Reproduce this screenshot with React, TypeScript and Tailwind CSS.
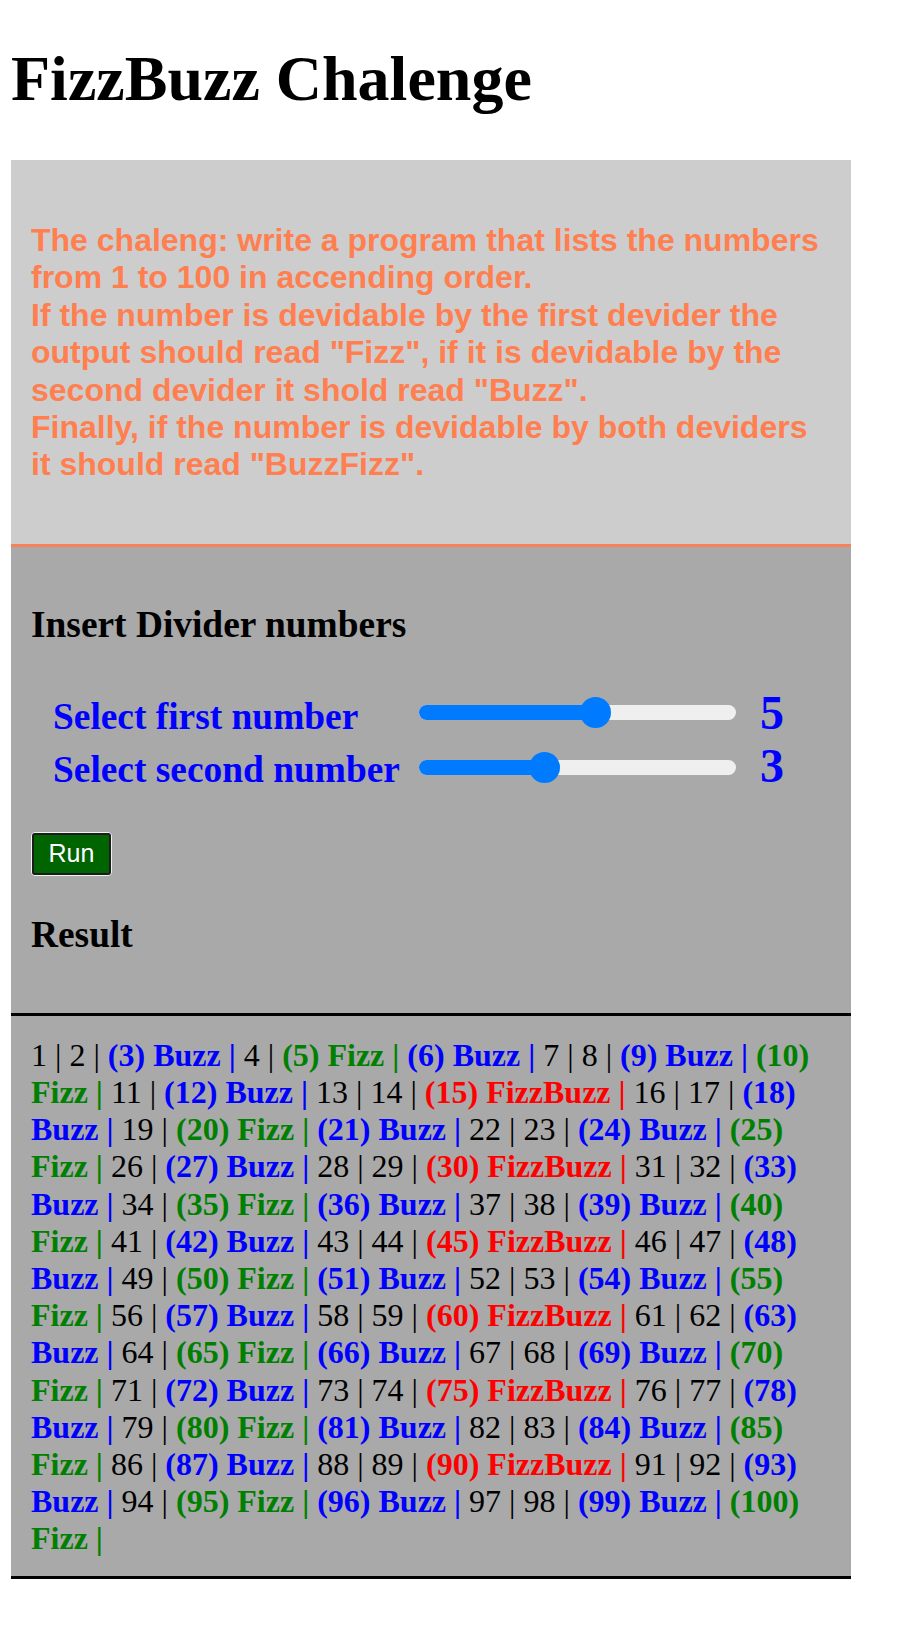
import React from "react";

const serif = "font-['Liberation_Serif','Times_New_Roman',serif]";

function Slider({ variant }: { variant: 1 | 2 }) {
  const fill = variant === 1 ? "w-[177px]" : "w-[126px]";
  const thumb = variant === 1 ? "left-[161px]" : "left-[110px]";
  const mt = variant === 1 ? "mt-[2px]" : "mt-[4px]";
  return (
    <div className={`relative ml-[1px] w-[317px] h-[31px] shrink-0 ${mt}`}>
      <div className="absolute left-0 right-0 top-[8px] h-[15px] rounded-full bg-[#efefef]" />
      <div className={`absolute left-0 top-[8px] h-[15px] rounded-l-full bg-[#007bff] ${fill}`} />
      <div className={`absolute top-0 w-[31px] h-[31px] rounded-full bg-[#007bff] ${thumb}`} />
    </div>
  );
}

function Results() {
  const breakAfter = new Set([10, 18, 25, 33, 40, 48, 55, 63, 70, 78, 85, 93, 100]);
  const out: React.ReactNode[] = [];
  for (let n = 1; n <= 100; n++) {
    const f = n % 5 === 0;
    const b = n % 3 === 0;
    if (!f && !b) {
      out.push(<span key={n}>{`${n} | `}</span>);
      continue;
    }
    const word = f && b ? "FizzBuzz" : f ? "Fizz" : "Buzz";
    const color = f && b ? "text-[#ff0000]" : f ? "text-[#008000]" : "text-[#0000ff]";
    out.push(
      <React.Fragment key={n}>
        <b className={`font-bold ${color}`}>
          {`(${n})`}
          {breakAfter.has(n) ? <br /> : " "}
          {`${word} |`}
        </b>{" "}
      </React.Fragment>
    );
  }
  return <>{out}</>;
}

export default function App() {
  return (
    <div className={`bg-white min-h-[1650px] pt-[42px] px-[11px] text-black ${serif}`}>
      <h1 className="text-[64px] leading-[74px] font-bold mb-[44px] whitespace-nowrap">FizzBuzz Chalenge</h1>

      <div className="w-[840px]">
        <div className="bg-[#cdcdcd] px-[20px] pt-[62px] pb-[60px] border-b-[3px] border-[#f7825a]">
          <p className="font-['Liberation_Sans',Arial,sans-serif] font-bold text-[32px] leading-[37.4px] text-[#ff7f50] whitespace-nowrap">
            The chaleng: write a program that lists the numbers
            <br />
            from 1 to 100 in accending order.
            <br />
            If the number is devidable by the first devider the
            <br />
            output should read "Fizz", if it is devidable by the
            <br />
            second devider it shold read "Buzz".
            <br />
            Finally, if the number is devidable by both deviders
            <br />
            it should read "BuzzFizz".
          </p>
        </div>

        <div className="bg-[#a9a9a9] px-[20px] pt-[56px] pb-[57px]">
          <h3 className="text-[37.4px] leading-[43px] font-bold whitespace-nowrap">Insert Divider numbers</h3>

          <div className="mt-[49px] flex items-start">
            <div className="ml-[22px] w-[365px] shrink-0 text-[37.4px] leading-[43px] font-bold text-[#0000ff] whitespace-nowrap">
              Select first number
            </div>
            <Slider variant={1} />
            <div className="ml-[24px] text-[48px] leading-[35px] font-bold text-[#0000ff]">5</div>
          </div>
          <div className="mt-[10px] flex items-start">
            <div className="ml-[22px] w-[365px] shrink-0 text-[37.4px] leading-[43px] font-bold text-[#0000ff] whitespace-nowrap">
              Select second number
            </div>
            <Slider variant={2} />
            <div className="ml-[24px] text-[48px] leading-[35px] font-bold text-[#0000ff]">3</div>
          </div>

          <div className="mt-[41px] w-[81px] h-[44px] rounded-[4px] border border-[#f2f2f2]">
            <div className="w-full h-full rounded-[3px] border-2 border-[#1c1c1c] bg-[#006400] flex items-center justify-center font-['Liberation_Sans',Arial,sans-serif] text-[25px] leading-none text-white">
              Run
            </div>
          </div>

          <h3 className="mt-[37px] text-[37.4px] leading-[43px] font-bold">Result</h3>
        </div>

        <div className="bg-[#a9a9a9] border-y-[3px] border-black px-[20px] pt-[21px] pb-[18px] text-[32px] leading-[37.2px] whitespace-nowrap">
          <Results />
        </div>
      </div>
    </div>
  );
}
